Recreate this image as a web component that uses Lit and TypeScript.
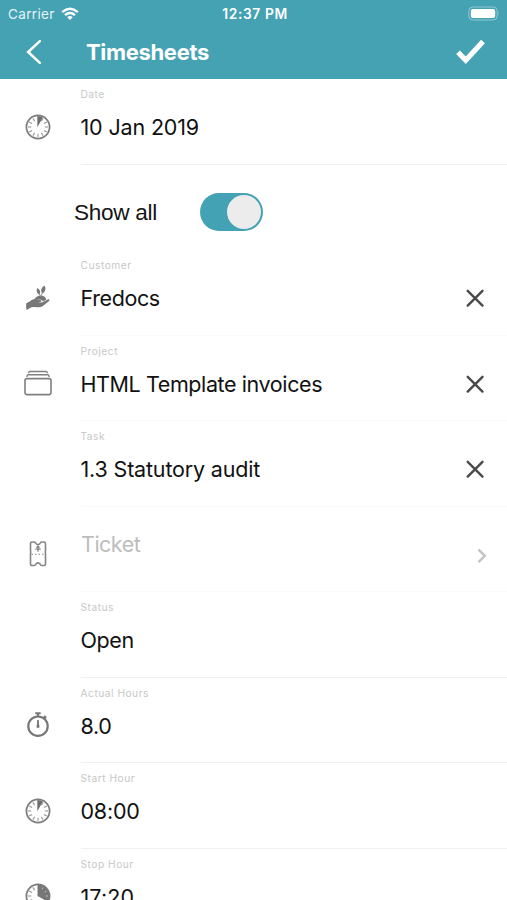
import { LitElement, html, svg, css, nothing } from "lit";
import { customElement, property } from "lit/decorators.js";
import { styleMap } from "lit/directives/style-map.js";

type Row = {
  label: string;
  value: string;
  icon?: string;
  line: string;
  tracking?: number;
  action?: "clear" | "open";
};

const rows: Row[] = [
  { label: "Customer", value: "Fredocs", icon: "hand", line: "faint", action: "clear" },
  { label: "Project", value: "HTML Template invoices", icon: "folders", line: "faint", action: "clear" },
  { label: "Task", value: "1.3 Statutory audit", line: "faint", tracking: -0.17, action: "clear" },
  { label: "", value: "Ticket", icon: "ticket", line: "faint", tracking: -0.5, action: "open" },
  { label: "Status", value: "Open", line: "clear" },
  { label: "Actual Hours", value: "8.0", icon: "stopwatch", line: "clear" },
  { label: "Start Hour", value: "08:00", icon: "clock", line: "clear", tracking: -0.2 },
  { label: "Stop Hour", value: "17:20", icon: "clockLate", line: "clear", tracking: 0.1 },
];

const ticks = [30, 60, 90, 120, 150, 180, 210, 240, 270, 300, 330].map(
  (a) => svg`<path d="M14 3.8v3.4" transform="rotate(${a} 14 14)" stroke="#999" stroke-width="1.100"/>`
);

const icons: Record<string, unknown> = {
  clock: html`<svg width="28" height="28" viewBox="0 0 28 28" fill="none">
    <circle cx="14" cy="14" r="11.600" stroke="#7c7c7c" stroke-width="1.700" />${ticks}
    <path d="M13.300 3v11.200L18.900 4.600Q16.500 3 13.300 3z" fill="#6f6f6f" />
  </svg>`,
  clockLate: html`<svg width="28" height="28" viewBox="0 0 28 28" fill="none">
    <circle cx="14" cy="14" r="11.600" stroke="#7c7c7c" stroke-width="1.700" />${ticks}
    <path d="M13.500 2.500A11.500 11.500 0 0 1 23.900 19.800L13.500 14z" fill="#777" />
    <path d="M19 5.500l-1 1.600M22.500 9l-1.600 1M24 14h-2" stroke="#bbb" />
  </svg>`,
  stopwatch: html`<svg width="28" height="28" viewBox="0 0 28 28" fill="none" stroke="#777">
    <circle cx="14" cy="15.200" r="9.700" stroke-width="2.200" />
    <path d="M11.300 2.300h5.400M14 2.400v3.200" stroke-width="2.100" />
    <path d="M19.800 5.200l2.300 1.800" stroke-width="2.400" />
    <path d="M14 8.600l1.600 7.400q-1.600 2-3.200 0z" fill="#777" stroke="none" />
    <path d="M14 9v6" stroke-width="1.600" />
  </svg>`,
  hand: html`<svg width="28" height="28" viewBox="0 0 28 28" fill="#777">
    <path d="M2.200 19.200q2.800-.7 4.800-2.600 2-2 4.800-1.500l4.600.7q1.600.6.8 1.700-.8.8-4.800.6 4.900 1 7.100-.3l4.200-2.400q1.500-.6 2 .4-.2 1.200-1.500 2l-5.700 4.500q-1.500 1-4.500.9l-5-.1q-2.200 0-4.200 1.600l-2.200 1.400q-.8-3-.4-6.900z" />
    <path d="M10.500 15.200q2-3.600 6.400-3.600 3.900 0 5.500 3.900l-3.400 2q-.5-1.900-2.800-2.100z" />
    <path d="M13.300 4q4 2.200 2.400 6.700-4.600-2.200-2.400-6.700zM20.600 1.500q2.600 5.300-2.500 8.300-2.900-5.100 2.500-8.300z" />
    <path d="M15 9l1.700 4 1.500-4" fill="none" stroke="#888" stroke-width=".8" />
  </svg>`,
  folders: html`<svg width="28" height="28" viewBox="0 0 28 28" fill="none" stroke="#808080" stroke-width="1.400">
    <rect x="1" y="9.600" width="26" height="16" rx="2" stroke-width="1.600" />
    <path d="M2.700 8l.7-1.700q.3-.6 1-.6h19.200q.7 0 1 .6l.7 1.700M4.400 4.200l.5-1q.3-.7 1-.7h16.200q.7 0 1 .7l.5 1" />
  </svg>`,
  ticket: html`<svg width="28" height="28" viewBox="0 0 28 28" fill="none" stroke="#858585" stroke-width="1.600">
    <path d="M8.100 2H10q1 0 1.600.9l1 1.300q1.400 1 2.800 0l1-1.300q.6-.9 1.600-.9h1.900q1.600 0 1.600 1.600v7.200q-.5 1.300 0 2.600V23.700q0 1.800-1.600 1.800H18q-1 0-1.600-.9l-1-1.200q-1.400-1-2.800 0l-1 1.200q-.6.9-1.600.9H8.100q-1.600 0-1.600-1.800V13.400q.5-1.300 0-2.600V3.600Q6.500 2 8.100 2z" />
    <path d="M7.500 14.300H21" stroke-width="1.100" stroke-dasharray="1.500 2" />
    <path d="M14 6.300v5.400M11.300 9.100h5.400M12.500 7.700L14 6.200l1.500 1.500" stroke-width="1.300" />
  </svg>`,
};

@customElement("field-row")
class FieldRow extends LitElement {
  @property({ attribute: false }) row!: Row;

  static styles = css`
    :host { display: grid; grid-template-columns: 81px 1fr; height: 85.5px; }
    .icon { padding: 33.5px 0 0 23.5px; }
    .icon svg { overflow: visible; }
    .icon path, .icon circle, .icon rect { vector-effect: none; }
    svg { display: block; }
    .body { display: flex; flex-direction: column; border-bottom: 1px solid #f1f1f1; min-width: 0; }
    .faint { border-color: #f9f9f9; }
    .line { display: flex; align-items: center; justify-content: space-between; height: 28px; padding: 12.4px 20px 0 0; }
    .label { height: 14px; padding-top: 8px; margin-left: -0.5px; font-size: 10.2px; line-height: 14px; letter-spacing: 0.52px; color: #c7c7c7; }
    .value { margin-left: -0.5px; font-size: 21.5px; line-height: 28px; letter-spacing: -0.4px; color: #111; white-space: nowrap; }
    .link .value { align-self: flex-start; color: #bdbdbd; margin-top: -11.5px; margin-left: 0; }
    .link .line { padding-top: 27px; padding-right: 17px; }
    .link .label { height: 0; }
  `;

  render() {
    const r = this.row;
    const spacing = r.tracking === undefined ? {} : { letterSpacing: `${r.tracking}px` };
    return html`
      <div class="icon">${r.icon ? icons[r.icon] : nothing}</div>
      <div class="body ${r.line} ${r.action === "open" ? "link" : ""}">
        <div class="label">${r.label}</div>
        <div class="line">
          <span class="value" style=${styleMap(spacing)}>${r.value}</span>
          ${r.action === "clear"
            ? html`<svg width="24" height="24" viewBox="0 0 24 24"><path d="M4.700 4.800l14.800 14.800M19.500 4.800L4.700 19.600" stroke="#4a4a4a" stroke-width="2.400" stroke-linecap="round" /></svg>`
            : nothing}
          ${r.action === "open"
            ? html`<svg width="16" height="20" viewBox="0 0 16 20"><path d="M4.500 3.500l6.300 6.300-6.300 6.300" fill="none" stroke="#c4c4c4" stroke-width="2.500" /></svg>`
            : nothing}
        </div>
      </div>
    `;
  }
}

@customElement("app-root")
class AppRoot extends LitElement {
  static styles = css`
    :host { display: block; height: 900px; overflow: hidden; background: #fff; font-family: Inter, "Liberation Sans", sans-serif; }
    header { height: 79px; background: #45a2b3; color: #fff; }
    svg { display: block; }
    .status { display: grid; grid-template-columns: 1fr auto 1fr; align-items: center; height: 28px; padding: 0 6px 0 8px; font-size: 13px; }
    .carrier { display: flex; align-items: center; gap: 6px; color: #e4f4f6; font-size: 13.5px; letter-spacing: 0.35px; }
    .carrier svg { margin-top: -1px; }
    .time { padding-left: 1px; font-weight: 600; font-size: 13.8px; letter-spacing: 0.6px; }
    .battery { justify-self: end; margin-top: -1px; }
    .bar { display: flex; align-items: center; height: 48px; padding: 0 20px 0 22px; }
    .title { margin: 0 auto 0 40px; font-size: 22px; font-weight: 700; letter-spacing: -0.33px; }
    .toggle { display: flex; align-items: center; height: 85.5px; padding-left: 74px; box-sizing: border-box; }
    .name { width: 126px; padding-top: 11px; font: 22.600px "Liberation Sans", sans-serif; letter-spacing: -0.3px; color: #151515; }
    .switch { display: flex; justify-content: flex-end; width: 63px; height: 38px; margin-top: 9px; padding: 2px; box-sizing: border-box; border-radius: 19px; background: #43a3b4; }
    .knob { width: 34px; height: 34px; border-radius: 50%; background: #ececec; }
  `;

  render() {
    return html`
      <header>
        <div class="status">
          <div class="carrier">
            <span>Carrier</span>
            <svg width="18" height="14" viewBox="0 0 18 14" fill="none" stroke="#fff" stroke-width="2.400">
              <path d="M1.200 5.100q7.800-6.600 15.600 0M4 8.200q5-4.200 10 0" />
              <path d="M6.200 10.200q2.800-2.200 5.600 0L9 13z" fill="#fff" stroke="none" />
            </svg>
          </div>
          <span class="time">12:37 PM</span>
          <svg class="battery" width="33" height="15" viewBox="0 0 33 15">
            <rect x=".8" y="1" width="28.400" height="13" rx="4" fill="none" stroke="#8fc7d1" />
            <rect x="2.800" y="3" width="24.400" height="9" rx="2" fill="#fff" />
            <path d="M30.500 5.300q1.600 2.200 0 4.400z" fill="#8fc7d1" />
          </svg>
        </div>
        <div class="bar">
          <svg width="24" height="30" viewBox="0 0 24 30"><path d="M17.800 4.200L6.200 15l11.600 10.800" fill="none" stroke="#fff" stroke-width="2.500" stroke-linecap="round" /></svg>
          <span class="title">Timesheets</span>
          <svg width="32" height="28" viewBox="0 0 32 28"><path d="M3 14.200l7.800 8L28 3.500" fill="none" stroke="#fff" stroke-width="5.200" /></svg>
        </div>
      </header>
      <field-row .row=${{ label: "Date", value: "10 Jan 2019", icon: "clock", line: "clear", tracking: -0.15 }}></field-row>
      <div class="toggle">
        <span class="name">Show all</span>
        <div class="switch"><div class="knob"></div></div>
      </div>
      ${rows.map((r) => html`<field-row .row=${r}></field-row>`)}
    `;
  }
}
